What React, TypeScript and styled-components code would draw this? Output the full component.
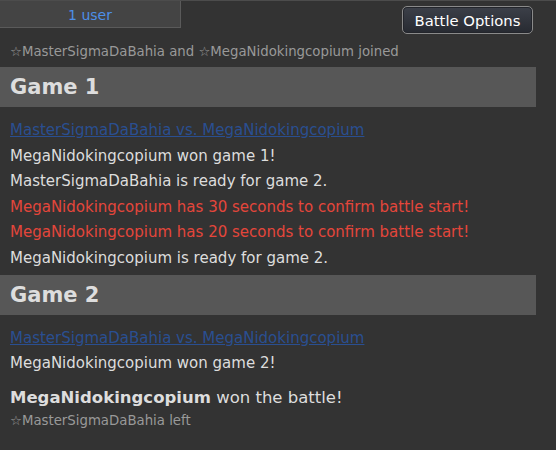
import React from "react";
import styled, { createGlobalStyle } from "styled-components";

const GlobalStyle = createGlobalStyle`
  html, body {
    margin: 0;
    padding: 0;
    background: #333333;
  }
  body {
    font-family: "DejaVu Sans", Verdana, sans-serif;
    color: #dddddd;
  }
`;

const Page = styled.div`
  width: 556px;
  height: 450px;
  overflow: hidden;
  background: #333333;
  border-top: 1px solid #4c4c4c;
  box-sizing: border-box;
`;

const TopBar = styled.div`
  display: flex;
  justify-content: space-between;
  align-items: flex-start;
  height: 33px;
`;

const UserTab = styled.div`
  width: 181px;
  height: 27px;
  padding-top: 2px;
  box-sizing: border-box;
  background: #444444;
  border-right: 1px solid #5a5a5a;
  border-bottom: 1px solid #5a5a5a;
  color: #4d8fe8;
  font-size: 14px;
  display: flex;
  align-items: center;
  justify-content: center;
`;

const OptionsButton = styled.button`
  margin: 5px 23px 0 0;
  width: 131px;
  height: 28px;
  border: 1px solid #8a8a8a;
  border-radius: 5px;
  background: linear-gradient(to bottom, #3c4049, #272a31);
  box-shadow: inset 0 0 0 1px #23252b;
  color: #ffffff;
  font-family: "DejaVu Sans", Verdana, sans-serif;
  font-size: 14.8px;
  padding: 0;
`;

const Log = styled.div`
  width: 536px;
  padding-top: 10px;
`;

const Notice = styled.div<{ $gap?: number }>`
  padding: 0 10px;
  margin-bottom: ${(p) => p.$gap ?? 0}px;
  line-height: 16px;
  font-size: 13.3px;
  color: #999999;
`;

const GameHeader = styled.h2`
  margin: 3px 0 11px;
  height: 40px;
  line-height: 40px;
  padding: 0 10px;
  background: #575757;
  color: #dddddd;
  font-size: 21px;
  font-weight: bold;
`;

const Line = styled.div<{ $tone?: "normal" | "error" }>`
  padding: 4px 10px;
  line-height: 17.6px;
  font-size: 15px;
  color: ${(p) => (p.$tone === "error" ? "#e4463b" : "#dddddd")};
`;

const MatchLink = styled.a`
  color: #2a4f91;
  text-decoration: underline;
  cursor: pointer;
`;

const Result = styled.div`
  margin-top: 6px;
  padding: 4px 10px;
  line-height: 22px;
  font-size: 16.5px;
  color: #dddddd;

  strong {
    font-weight: bold;
  }
`;

export default function App() {
  return (
    <>
      <GlobalStyle />
      <Page>
        <TopBar>
          <UserTab>1 user</UserTab>
          <OptionsButton>Battle Options</OptionsButton>
        </TopBar>
        <Log>
          <Notice $gap={7}>☆MasterSigmaDaBahia and ☆MegaNidokingcopium joined</Notice>

          <GameHeader>Game 1</GameHeader>
          <Line>
            <MatchLink>MasterSigmaDaBahia vs. MegaNidokingcopium</MatchLink>
          </Line>
          <Line>MegaNidokingcopium won game 1!</Line>
          <Line>MasterSigmaDaBahia is ready for game 2.</Line>
          <Line $tone="error">MegaNidokingcopium has 30 seconds to confirm battle start!</Line>
          <Line $tone="error">MegaNidokingcopium has 20 seconds to confirm battle start!</Line>
          <Line>MegaNidokingcopium is ready for game 2.</Line>

          <GameHeader>Game 2</GameHeader>
          <Line>
            <MatchLink>MasterSigmaDaBahia vs. MegaNidokingcopium</MatchLink>
          </Line>
          <Line>MegaNidokingcopium won game 2!</Line>

          <Result>
            <strong>MegaNidokingcopium</strong> won the battle!
          </Result>
          <Notice>☆MasterSigmaDaBahia left</Notice>
        </Log>
      </Page>
    </>
  );
}
